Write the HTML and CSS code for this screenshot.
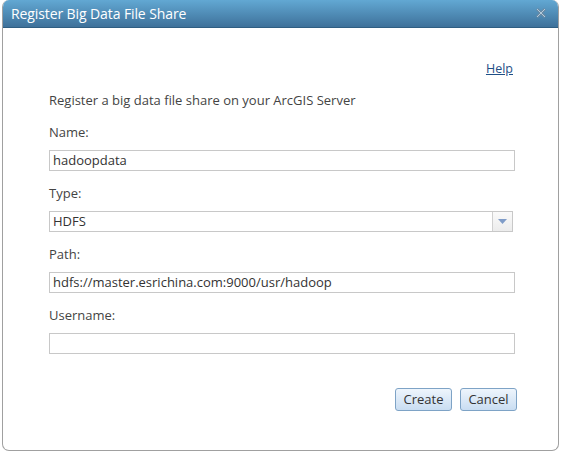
FILE: index.html
```html
<!DOCTYPE html>
<html>
<head>
<meta charset="utf-8">
<link rel="stylesheet" href="styles.css">
</head>
<body>
<div class="page">
  <div class="dialog">
    <div class="titlebar">
      <span class="title">Register Big Data File Share</span>
      <svg class="close" width="10" height="10" viewBox="0 0 10 10"><path d="M1 1L9 9M9 1L1 9" stroke="#6a8aa4" stroke-width="2.8" fill="none"/><path d="M1 1L9 9M9 1L1 9" stroke="#b3cadb" stroke-width="1" fill="none"/></svg>
    </div>
    <div class="body">
      <div class="helprow"><a class="help" href="#">Help</a></div>
      <div class="desc">Register a big data file share on your ArcGIS Server</div>
      <div class="field">
        <div class="label">Name:</div>
        <div class="input">hadoopdata</div>
      </div>
      <div class="field">
        <div class="label">Type:</div>
        <div class="select"><span class="selval">HDFS</span><span class="arrow"><svg width="9" height="5" viewBox="0 0 9 5"><path d="M0 0H9L4.5 5Z" fill="#7f9cc8"/></svg></span></div>
      </div>
      <div class="field">
        <div class="label">Path:</div>
        <div class="input">hdfs://master.esrichina.com:9000/usr/hadoop</div>
      </div>
      <div class="field">
        <div class="label">Username:</div>
        <div class="input"></div>
      </div>
      <div class="buttons">
        <button class="btn">Create</button>
        <button class="btn">Cancel</button>
      </div>
    </div>
  </div>
</div>
</body>
</html>
```
FILE: styles.css
```css
html, body { margin: 0; padding: 0; background: #fff; }
body { font-family: "Open Sans", "DejaVu Sans", sans-serif; font-size: 13px; color: #444; }
.page { padding-left: 2px; height: 457px; box-sizing: border-box; }
.dialog {
  width: 557px; height: 451px; box-sizing: border-box;
  border: 1px solid #a0a0a0; border-top: none; border-radius: 7px 7px 7px 7px;
  background: #fff; overflow: hidden;
}
.titlebar {
  height: 28px; box-sizing: border-box;
  background: linear-gradient(#62a8d3, #3e719a);
  display: flex; align-items: center; justify-content: space-between;
  padding: 0 12px 0 8px;
  border-bottom: 1px solid #2f5e82;
}
.title { color: #fff; font-size: 14px; letter-spacing: -0.1px; }
.close { margin-top: -2px; }
.body { padding: 33px 0 0 46px; }
.helprow { width: 466px; display: flex; justify-content: flex-end; height: 16px; line-height: 16px; }
.help { color: #1f4f86; text-decoration: underline; font-size: 12.5px; margin-right: 2px; }
.desc { margin-top: 15px; height: 16px; line-height: 16px; }
.field { margin-top: 16px; }
.field + .field { margin-top: 14px; }
.label { height: 16px; line-height: 16px; margin-bottom: 10px; }
.input {
  width: 466px; height: 21px; box-sizing: border-box;
  border: 1px solid #c8c8c8; padding: 0 3px; line-height: 19px; color: #333;
}
.select {
  width: 464px; height: 21px; box-sizing: border-box;
  border: 1px solid #c8c8c8; display: flex; color: #333;
}
.selval { flex: 1; padding: 0 3px; line-height: 19px; }
.arrow {
  width: 19px; border-left: 1px solid #d0d0d0; background: linear-gradient(#fafafa, #ececec);
  display: flex; align-items: center; justify-content: center;
}
.buttons { display: flex; gap: 8px; margin-top: 34px; padding-left: 346px; }
.btn {
  width: 57px; height: 23px; box-sizing: border-box;
  font-family: inherit; font-size: 13px; color: #333;
  border: 1px solid #7ea3c6; border-radius: 3px;
  background: linear-gradient(#eef5fc, #c9ddf2);
  padding: 0; line-height: 19px;
}
```
